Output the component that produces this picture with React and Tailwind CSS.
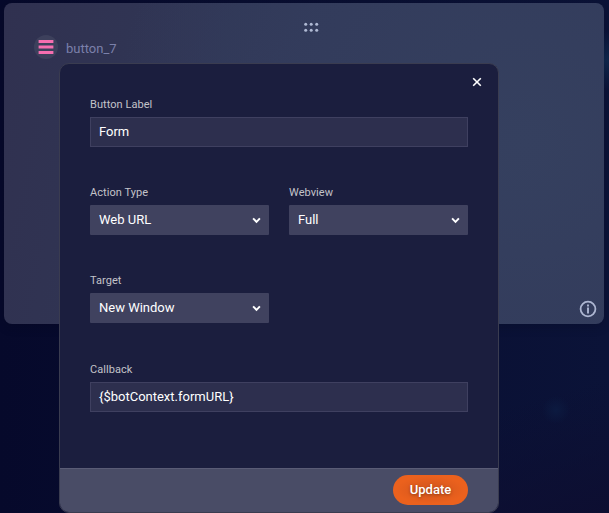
function Chevron() {
  return (
    <svg width="9" height="7" viewBox="0 0 9 7" fill="none" className="mt-px shrink-0">
      <path d="M1.1 1.3 L4.5 4.9 L7.9 1.3" stroke="#fff" strokeWidth="1.9" />
    </svg>
  );
}

function Field({ label, children, className = "" }) {
  return (
    <div className={className}>
      <div className="mb-1 h-4 text-[11px] leading-4 tracking-[0.05px] text-[#c3c3c9]">{label}</div>
      {children}
    </div>
  );
}

function TextBox({ value }) {
  return (
    <div className="flex h-[30px] items-center border border-[#3f4060] bg-[#2d2f4e] px-2 text-[13px] text-white">
      {value}
    </div>
  );
}

function SelectBox({ value }) {
  return (
    <div className="flex h-[30px] items-center justify-between rounded-[1px] bg-[#40425f] pr-2 pl-[9px] text-[13px] text-white">
      <span>{value}</span>
      <Chevron />
    </div>
  );
}

export default function App() {
  return (
    <div className="relative h-[513px] w-[609px] overflow-hidden bg-[radial-gradient(circle_at_556px_410px,#0c1a40_0px,transparent_14px),radial-gradient(circle_at_606px_60px,#10284e_0px,transparent_30px),linear-gradient(165deg,transparent_80%,#0d0e31_100%),linear-gradient(90deg,#06092b_0%,#0b1338_100%)] px-1 pt-[3px] font-['Roboto',sans-serif]">
      <section className="flex h-[321px] w-[600px] flex-col rounded-lg bg-[radial-gradient(circle_at_520px_140px,#35405f_0%,#333c5c_40%,transparent_75%),linear-gradient(100deg,#303150_0%,#303453_20%,#313959_50%,#333b5b_100%)] shadow-[0_2px_12px_rgba(0,0,20,0.2)]">
        <div className="flex h-[32px] justify-center pt-[19px] pl-[14px]">
          <svg width="15" height="10" viewBox="0 0 15 10" fill="#b0bad4">
            <circle cx="1.7" cy="2.3" r="1.5" />
            <circle cx="7.2" cy="2.3" r="1.5" />
            <circle cx="12.7" cy="2.3" r="1.5" />
            <circle cx="1.7" cy="8.2" r="1.5" />
            <circle cx="7.2" cy="8.2" r="1.5" />
            <circle cx="12.7" cy="8.2" r="1.5" />
          </svg>
        </div>
        <div className="flex items-center pl-[30px]">
          <svg width="24" height="24" viewBox="0 0 24 24">
            <circle cx="12" cy="12" r="12" fill="#3d405c" />
            <path d="M4.6 5h14.8v3H4.6zM4.6 10.5h14.8v3H4.6zM4.6 16h14.8v3H4.6z" fill="#f66eb0" />
          </svg>
          <span className="mt-[3px] ml-2 text-[13px] leading-4 text-[#7b80aa]">button_7</span>
        </div>
        <div className="mt-auto flex justify-end pr-[7px] pb-[6px]">
          <svg width="18" height="18" viewBox="0 0 18 18" fill="none">
            <circle cx="9" cy="9" r="7.4" stroke="#adb6d1" strokeWidth="1.8" />
            <path d="M9 4.4v2M9 7.4v6.2" stroke="#adb6d1" strokeWidth="1.9" />
          </svg>
        </div>
      </section>

      <div
        role="dialog"
        className="absolute top-[63px] left-[59px] flex h-[450px] w-[440px] flex-col overflow-hidden rounded-[10px] border border-[#3a3c50] bg-[#1b1e3e]"
      >
        <div className="flex h-[33px] justify-end pt-[13px] pr-[16px]">
          <svg width="10" height="10" viewBox="0 0 10 10" fill="none">
            <path d="M1.2 1.2 L8.8 8.8 M8.8 1.2 L1.2 8.8" stroke="#fff" strokeWidth="1.6" />
          </svg>
        </div>
        <div className="grow px-[30px]">
          <Field label="Button Label">
            <TextBox value="Form" />
          </Field>
          <div className="mt-[38px] grid grid-cols-2 gap-5">
            <Field label="Action Type">
              <SelectBox value="Web URL" />
            </Field>
            <Field label="Webview">
              <SelectBox value="Full" />
            </Field>
          </div>
          <Field label="Target" className="mt-[38px] w-[179px]">
            <SelectBox value="New Window" />
          </Field>
          <Field label="Callback" className="mt-[39px]">
            <TextBox value="{$botContext.formURL}" />
          </Field>
        </div>
        <footer className="flex h-[44px] shrink-0 items-start justify-end border-t border-[#5a5c76] bg-[#494c66] pt-[6px] pr-[30px]">
          <button className="h-[30px] w-[75px] rounded-full bg-[radial-gradient(ellipse_at_center,#d9591d_0%,#dc5a1d_30%,#eb611d_65%)] text-[13px] font-medium text-white [text-shadow:0_1px_3px_rgba(0,0,0,0.35)]">
            Update
          </button>
        </footer>
      </div>
    </div>
  );
}
